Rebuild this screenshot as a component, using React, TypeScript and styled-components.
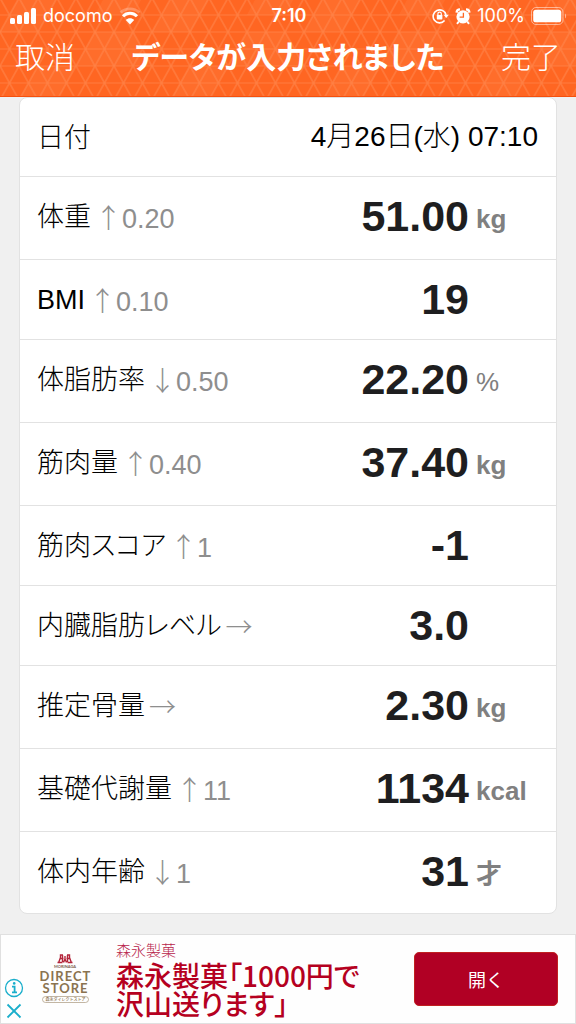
import React from 'react';
import styled, { createGlobalStyle } from 'styled-components';

const LATIN = `"Liberation Sans", "Noto Sans CJK JP", sans-serif`;
const JAPANESE = `"Noto Sans CJK JP", sans-serif`;

const GlobalStyle = createGlobalStyle`
  *, *::before, *::after { box-sizing: border-box; }
  body {
    margin: 0;
    background: #f0f0f0;
    font-family: ${LATIN};
    color: #000;
  }
`;

const Screen = styled.div`
  display: flex;
  flex-direction: column;
  min-height: 100vh;
`;

const Header = styled.header`
  position: relative;
  color: #fff;
  background: #ff6622;
  border-bottom: 1px solid #f5500e;
`;

const Backdrop = styled.svg`
  position: absolute;
  inset: 0;
  width: 100%;
  height: 100%;
`;

const StatusBar = styled.div`
  position: relative;
  display: grid;
  grid-template-columns: 1fr auto 1fr;
  align-items: center;
  height: 32px;
  padding: 0 8px 0 10px;
  font-family: Inter, sans-serif;
  font-size: 18px;
  line-height: 24px;
`;

const StatusGroup = styled.div<{ $end?: boolean }>`
  display: flex;
  align-items: center;
  justify-content: ${(p) => (p.$end ? 'flex-end' : 'flex-start')};
  gap: ${(p) => (p.$end ? 6 : 7)}px;
`;

const Clock = styled.time`
  font-weight: 600;
`;

const NavBar = styled.nav`
  position: relative;
  display: grid;
  grid-template-columns: 1fr auto 1fr;
  align-items: center;
  height: 64px;
  padding: 0 15px 18px;
`;

const NavButton = styled.button<{ $end?: boolean }>`
  justify-self: ${(p) => (p.$end ? 'end' : 'start')};
  padding: 0;
  border: 0;
  background: none;
  color: inherit;
  font-family: ${JAPANESE};
  font-size: 30px;
  font-weight: 300;
  line-height: 40px;
`;

const Title = styled.h1`
  margin: 0;
  font-family: ${JAPANESE};
  font-size: 30px;
  font-weight: 700;
  line-height: 40px;
  font-feature-settings: 'palt';
`;

const Main = styled.main`
  padding: 0 19px 20px;
`;

const Card = styled.div`
  overflow: hidden;
  background: #fff;
  border: 1px solid #e2e2e2;
  border-radius: 8px;
`;

const Table = styled.table`
  width: 100%;
  border-collapse: separate;
  border-spacing: 0;
`;

const Row = styled.tr<{ $height: number }>`
  height: ${(p) => p.$height}px;

  & > * {
    padding: 0;
    vertical-align: top;
    border-bottom: 1px solid #e2e2e2;
  }

  &:last-child {
    height: 81px;
  }

  &:last-child > * {
    border-bottom: 0;
  }
`;

const LabelCell = styled.th`
  text-align: left;
  font-weight: 300;
`;

const Label = styled.div`
  display: flex;
  align-items: flex-start;
  gap: 4px;
  padding: 24px 0 0 17px;
  font-size: 27px;
  line-height: 32px;
  white-space: nowrap;
  font-feature-settings: 'palt';
`;

const Delta = styled.span`
  padding-top: 2px;
  color: #8e8e8e;
  font-weight: 400;
`;

const Arrow = styled.span`
  font-family: ${JAPANESE};
  font-weight: 300;
  line-height: 26px;
`;

const DateCell = styled.td`
  && {
    padding: 22px 18px 0 0;
  }
  text-align: right;
  font-size: 28px;
  font-weight: 300;
  line-height: 34px;
  white-space: nowrap;
`;

const ValueCell = styled.td`
  && {
    padding-top: 15px;
  }
  text-align: right;
  color: #1e1e20;
  font-size: 43px;
  font-weight: 700;
  line-height: 48px;
`;

const UnitCell = styled.td<{ $light?: boolean }>`
  width: 87px;
  && {
    padding: 26px 0 0 7px;
  }
  color: #808080;
  font-size: 26px;
  font-weight: ${(p) => (p.$light ? 400 : 700)};
  line-height: 32px;
`;

const Ad = styled.aside`
  display: flex;
  align-items: stretch;
  height: 90px;
  margin-top: auto;
  padding-right: 17px;
  background: #fefefe;
  border: 1px solid #e0e0e0;
`;

const AdMarks = styled.div`
  display: flex;
  flex-direction: column;
  justify-content: flex-end;
  gap: 5px;
  width: 24px;
  padding: 0 0 4px 2px;
`;

const MarkButton = styled.button`
  display: block;
  padding: 0;
  border: 0;
  background: none;
  line-height: 0;
`;

const AdLogo = styled.svg`
  flex: none;
  width: 78px;
  height: 88px;
`;

const AdCopy = styled.div`
  flex: 1;
  padding: 4px 0 0 13px;
  font-family: ${JAPANESE};
  white-space: nowrap;
`;

const AdBrand = styled.div`
  color: #b8244a;
  font-size: 15px;
  font-weight: 300;
  line-height: 22px;
`;

const AdHeadline = styled.div`
  color: #b50020;
  font-size: 28px;
  font-weight: 500;
  line-height: 28px;
  font-feature-settings: 'palt';
`;

const AdButton = styled.button`
  align-self: center;
  width: 144px;
  height: 54px;
  padding: 0;
  border: 1px solid #c02020;
  border-radius: 5px;
  background: #b10024;
  color: #fff;
  font-family: ${JAPANESE};
  font-size: 18px;
  font-weight: 400;
`;

interface Metric {
  label: string;
  arrow: '↑' | '↓' | '→';
  delta?: string;
  value: string;
  unit?: string;
}

const METRICS: Metric[] = [
  { label: '体重', arrow: '↑', delta: '0.20', value: '51.00', unit: 'kg' },
  { label: 'BMI', arrow: '↑', delta: '0.10', value: '19' },
  { label: '体脂肪率', arrow: '↓', delta: '0.50', value: '22.20', unit: '%' },
  { label: '筋肉量', arrow: '↑', delta: '0.40', value: '37.40', unit: 'kg' },
  { label: '筋肉スコア', arrow: '↑', delta: '1', value: '-1' },
  { label: '内臓脂肪レベル', arrow: '→', value: '3.0' },
  { label: '推定骨量', arrow: '→', value: '2.30', unit: 'kg' },
  { label: '基礎代謝量', arrow: '↑', delta: '11', value: '1134', unit: 'kcal' },
  { label: '体内年齢', arrow: '↓', delta: '1', value: '31', unit: '才' },
];

function TrianglePattern() {
  return (
    <Backdrop aria-hidden="true">
      <defs>
        <pattern id="tri" width="19" height="34" y="-2" patternUnits="userSpaceOnUse">
          <g fill="none" stroke="#ff8a52">
            <path d="M0 0H19M0 17H19M0 34H19" strokeOpacity="0.4" strokeWidth="1.5" />
            <path d="M0 0L19 34M19 0L0 34" strokeOpacity="0.5" strokeWidth="1.8" />
          </g>
        </pattern>
        <pattern id="facets" width="152" height="102" y="-2" patternUnits="userSpaceOnUse">
          <path
            d="M0 34L19 0H57L38 34ZM76 68L95 34H133L152 68ZM19 102L38 68H76L57 102ZM95 17L104 0H142L133 17Z"
            fill="#ff7a3c"
            fillOpacity="0.35"
          />
        </pattern>
      </defs>
      <rect width="100%" height="100%" fill="url(#facets)" />
      <rect width="100%" height="100%" fill="url(#tri)" />
    </Backdrop>
  );
}

function SignalIcon() {
  return (
    <svg width="26" height="17" viewBox="0 0 26 17" fill="#fff" aria-hidden="true">
      <rect x="0" y="10" width="5" height="6" rx="1.5" />
      <rect x="7" y="7" width="5" height="9" rx="1.5" />
      <rect x="14" y="4" width="5" height="12" rx="1.5" />
      <rect x="21" y="0" width="5" height="16" rx="1.5" />
    </svg>
  );
}

function WifiIcon() {
  return (
    <svg width="22" height="18" viewBox="0 0 22 18" fill="none" stroke="#fff" aria-hidden="true">
      <path d="M1.5 5.5C7 .6 15 .6 20.5 5.5" strokeWidth="2.6" strokeOpacity="0.25" />
      <path d="M4 9.2C8 5.2 14 5.2 18 9.2" strokeWidth="3" />
      <path d="M11 17.4L6.800 13C9.300 10.800 12.700 10.800 15.200 13Z" fill="#fff" stroke="none" />
    </svg>
  );
}

function RotationLockIcon() {
  return (
    <svg width="17" height="16" viewBox="0 0 17 16" fill="none" aria-hidden="true">
      <path d="M12.6 12.6A6.5 6.5 0 1 1 14 7" stroke="#fff" strokeWidth="1.6" />
      <path d="M11.6 6.8H16.8L14.2 10Z" fill="#fff" />
      <rect x="4.8" y="7" width="5.6" height="4.4" rx="0.6" fill="#fff" />
      <path d="M5.9 7.2V5.8A1.7 1.7 0 0 1 9.3 5.8V7.2" stroke="#fff" strokeWidth="1.2" />
    </svg>
  );
}

function AlarmIcon() {
  return (
    <svg width="16" height="17" viewBox="0 0 16 17" fill="none" aria-hidden="true">
      <circle cx="8" cy="8.8" r="6.6" fill="#fff" />
      <path d="M1.6 4.6A3.4 3.4 0 0 1 5 1.4M14.4 4.6A3.4 3.4 0 0 0 11 1.4" stroke="#fff" strokeWidth="2.4" />
      <path d="M3.800 13.500L2 15.800M12.200 13.500L14 15.800" stroke="#fff" strokeWidth="2" />
      <path d="M8.400 4.800V9.200H4.600" stroke="#ff6724" strokeWidth="1.300" />
    </svg>
  );
}

function BatteryIcon() {
  return (
    <svg width="37" height="18" viewBox="0 0 37 18" aria-hidden="true">
      <rect x="0.5" y="0.5" width="31.5" height="17" rx="4.5" fill="none" stroke="#fff" strokeOpacity="0.5" />
      <rect x="2.2" y="2.7" width="28" height="12.600" rx="2.6" fill="#fff" />
      <path d="M34 6.500C35.500 7.500 35.500 10.500 34 11.500Z" fill="#fff" fillOpacity="0.5" />
    </svg>
  );
}

function StoreLogo() {
  return (
    <AdLogo viewBox="25 935 78 88" role="img" aria-label="MORINAGA DIRECT STORE">
      <g fill="none" stroke="#b3243a" strokeWidth="1.4">
        <path d="M63 955H60.500V957.500L58.500 963M67 955H69.500V957.500L71.500 963M57.500 962.500H62.500M67.500 962.500H72.500" />
        <path d="M62.500 955V962M67.500 955V962M60 958.500H63.500M66.500 958.500H70M65 956V959.500M65 959L63.500 962.500M65 959L66.500 962.500" />
      </g>
      <text x="65" y="967.500" textAnchor="middle" fill="#7c5a4c" fontFamily="Lato, sans-serif" fontWeight="700" fontSize="4">MORINAGA</text>
      <g fill="#8a7350" fontFamily="Lato, sans-serif" fontWeight="700" textAnchor="middle">
        <text x="65.500" y="980.500" fontSize="13" letterSpacing="1">DIRECT</text>
        <text x="65.500" y="993" fontSize="13" letterSpacing="1">STORE</text>
      </g>
      <rect x="42.500" y="996.500" width="46" height="6" rx="3" fill="none" stroke="#a8977c" strokeWidth="0.700" />
      <text x="65.500" y="1001" textAnchor="middle" fill="#8a7350" fontFamily={JAPANESE} fontWeight="500" fontSize="4">森永ダイレクトストア</text>
    </AdLogo>
  );
}

function MetricRow({ label, arrow, delta, value, unit }: Metric) {
  return (
    <Row $height={unit ? 83 : 80}>
      <LabelCell scope="row">
        <Label>
          <span>{label}</span>
          <Delta>
            <Arrow>{arrow}</Arrow>
            {delta}
          </Delta>
        </Label>
      </LabelCell>
      <ValueCell>{value}</ValueCell>
      <UnitCell $light={unit === '%'}>{unit}</UnitCell>
    </Row>
  );
}

export default function App() {
  return (
    <Screen>
      <GlobalStyle />
      <Header>
        <TrianglePattern />
        <StatusBar>
          <StatusGroup>
            <SignalIcon />
            <span>docomo</span>
            <WifiIcon />
          </StatusGroup>
          <Clock>7:10</Clock>
          <StatusGroup $end>
            <RotationLockIcon />
            <AlarmIcon />
            <span>100%</span>
            <BatteryIcon />
          </StatusGroup>
        </StatusBar>
        <NavBar>
          <NavButton type="button">取消</NavButton>
          <Title>データが入力されました</Title>
          <NavButton type="button" $end>完了</NavButton>
        </NavBar>
      </Header>
      <Main>
        <Card>
          <Table>
            <tbody>
              <Row $height={79}>
                <LabelCell scope="row">
                  <Label>日付</Label>
                </LabelCell>
                <DateCell colSpan={2}>4月26日(水) 07:10</DateCell>
              </Row>
              {METRICS.map((metric) => (
                <MetricRow key={metric.label} {...metric} />
              ))}
            </tbody>
          </Table>
        </Card>
      </Main>
      <Ad>
        <AdMarks>
          <MarkButton type="button" aria-label="広告情報">
            <svg width="20" height="20" viewBox="0 0 20 20" fill="none" stroke="#1aaecb" aria-hidden="true">
              <circle cx="10" cy="10" r="8.5" strokeWidth="1.3" />
              <path d="M8 8.700H10.600V14M8 14.300H13" strokeWidth="1.8" />
              <circle cx="10.2" cy="5.4" r="1.3" fill="#1aaecb" stroke="none" />
            </svg>
          </MarkButton>
          <MarkButton type="button" aria-label="閉じる">
            <svg width="20" height="16" viewBox="0 0 20 16" fill="none" stroke="#1aaecb" strokeWidth="1.8" aria-hidden="true">
              <path d="M3.500 1.500L16.500 14.500M16.500 1.500L3.500 14.500" />
            </svg>
          </MarkButton>
        </AdMarks>
        <StoreLogo />
        <AdCopy>
          <AdBrand>森永製菓</AdBrand>
          <AdHeadline>
            森永製菓「1000円で
            <br />
            沢山送ります」
          </AdHeadline>
        </AdCopy>
        <AdButton type="button">開く</AdButton>
      </Ad>
    </Screen>
  );
}
